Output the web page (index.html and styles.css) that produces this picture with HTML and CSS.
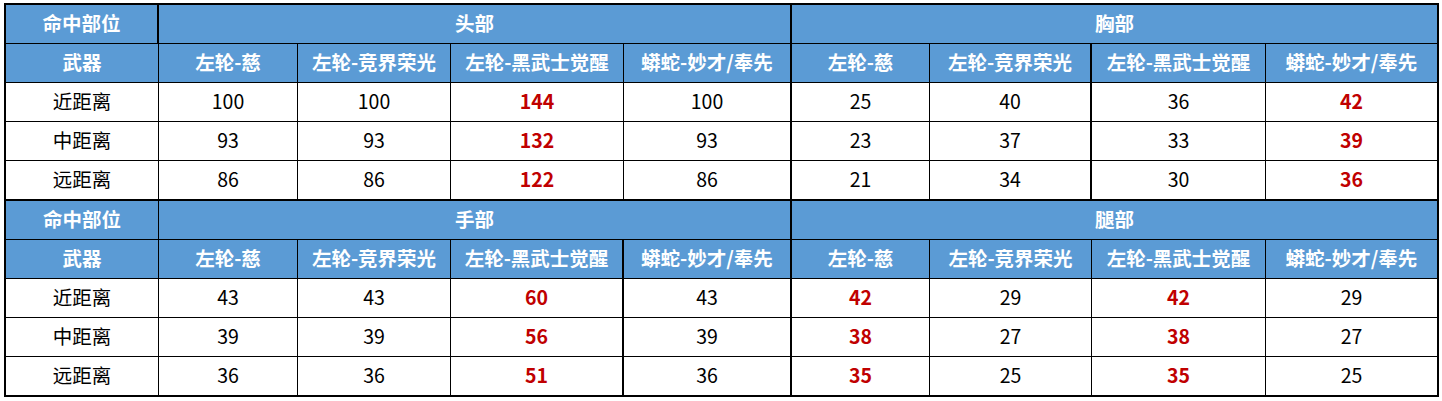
FILE: index.html
```html
<!DOCTYPE html>
<html lang="zh-CN">
<head>
<meta charset="utf-8">
<title>命中部位伤害表</title>
<link rel="stylesheet" href="styles.css">
</head>
<body>
<div class="sheet">
  <div class="grid">
    <!-- 上半部分 -->
    <div class="c h">命中部位</div>
    <div class="c h span4 tk">头部</div>
    <div class="c h span4 tk">胸部</div>

    <div class="c h">武器</div>
    <div class="c h">左轮-慈</div>
    <div class="c h">左轮-竞界荣光</div>
    <div class="c h">左轮-黑武士觉醒</div>
    <div class="c h tk">蟒蛇-妙才/奉先</div>
    <div class="c h">左轮-慈</div>
    <div class="c h">左轮-竞界荣光</div>
    <div class="c h">左轮-黑武士觉醒</div>
    <div class="c h tk">蟒蛇-妙才/奉先</div>

    <div class="c">近距离</div>
    <div class="c">100</div><div class="c">100</div><div class="c r">144</div><div class="c tk">100</div>
    <div class="c">25</div><div class="c">40</div><div class="c">36</div><div class="c r tk">42</div>

    <div class="c">中距离</div>
    <div class="c">93</div><div class="c">93</div><div class="c r">132</div><div class="c tk">93</div>
    <div class="c">23</div><div class="c">37</div><div class="c">33</div><div class="c r tk">39</div>

    <div class="c b">远距离</div>
    <div class="c b">86</div><div class="c b">86</div><div class="c r b">122</div><div class="c tk b">86</div>
    <div class="c b">21</div><div class="c b">34</div><div class="c b">30</div><div class="c r tk b">36</div>

    <!-- 下半部分 -->
    <div class="c h">命中部位</div>
    <div class="c h span4 tk">手部</div>
    <div class="c h span4 tk">腿部</div>

    <div class="c h">武器</div>
    <div class="c h">左轮-慈</div>
    <div class="c h">左轮-竞界荣光</div>
    <div class="c h">左轮-黑武士觉醒</div>
    <div class="c h tk">蟒蛇-妙才/奉先</div>
    <div class="c h">左轮-慈</div>
    <div class="c h">左轮-竞界荣光</div>
    <div class="c h">左轮-黑武士觉醒</div>
    <div class="c h tk">蟒蛇-妙才/奉先</div>

    <div class="c">近距离</div>
    <div class="c">43</div><div class="c">43</div><div class="c r">60</div><div class="c tk">43</div>
    <div class="c r">42</div><div class="c">29</div><div class="c r">42</div><div class="c tk">29</div>

    <div class="c">中距离</div>
    <div class="c">39</div><div class="c">39</div><div class="c r">56</div><div class="c tk">39</div>
    <div class="c r">38</div><div class="c">27</div><div class="c r">38</div><div class="c tk">27</div>

    <div class="c b">远距离</div>
    <div class="c b">36</div><div class="c b">36</div><div class="c r b">51</div><div class="c tk b">36</div>
    <div class="c r b">35</div><div class="c b">25</div><div class="c r b">35</div><div class="c tk b">25</div>
  </div>
</div>
</body>
</html>
```
FILE: styles.css
```css
html, body {
  margin: 0;
  padding: 0;
  background: #ffffff;
}

.sheet {
  padding: 3px 0 0 4px;
}

.grid {
  display: grid;
  grid-template-columns: 153px 139px 153px 173px 168px 138px 162px 174px 173px;
  grid-template-rows: 39px 39px 39px 39px 40px 39px 39px 39px 39px 40px;
  width: max-content;
  border-left: 2px solid #000;
  border-top: 2px solid #000;
  font-family: "Noto Sans CJK SC", "Noto Sans", sans-serif;
  font-size: 19.5px;
  color: #000;
}

.c {
  box-sizing: border-box;
  display: flex;
  align-items: center;
  justify-content: center;
  padding-bottom: 3px;
  border-right: 1px solid #000;
  border-bottom: 1px solid #000;
  white-space: nowrap;
  line-height: 1;
}

.c:nth-child(9n+1) {
  border-right-width: 2px;
}

.h {
  background: #5b9bd5;
  color: #ffffff;
  font-weight: 700;
}

.span4 {
  grid-column: span 4;
}

.tk {
  border-right-width: 2px;
}

.b {
  border-bottom-width: 2px;
}

.r {
  color: #c00000;
  font-weight: 700;
}
```
